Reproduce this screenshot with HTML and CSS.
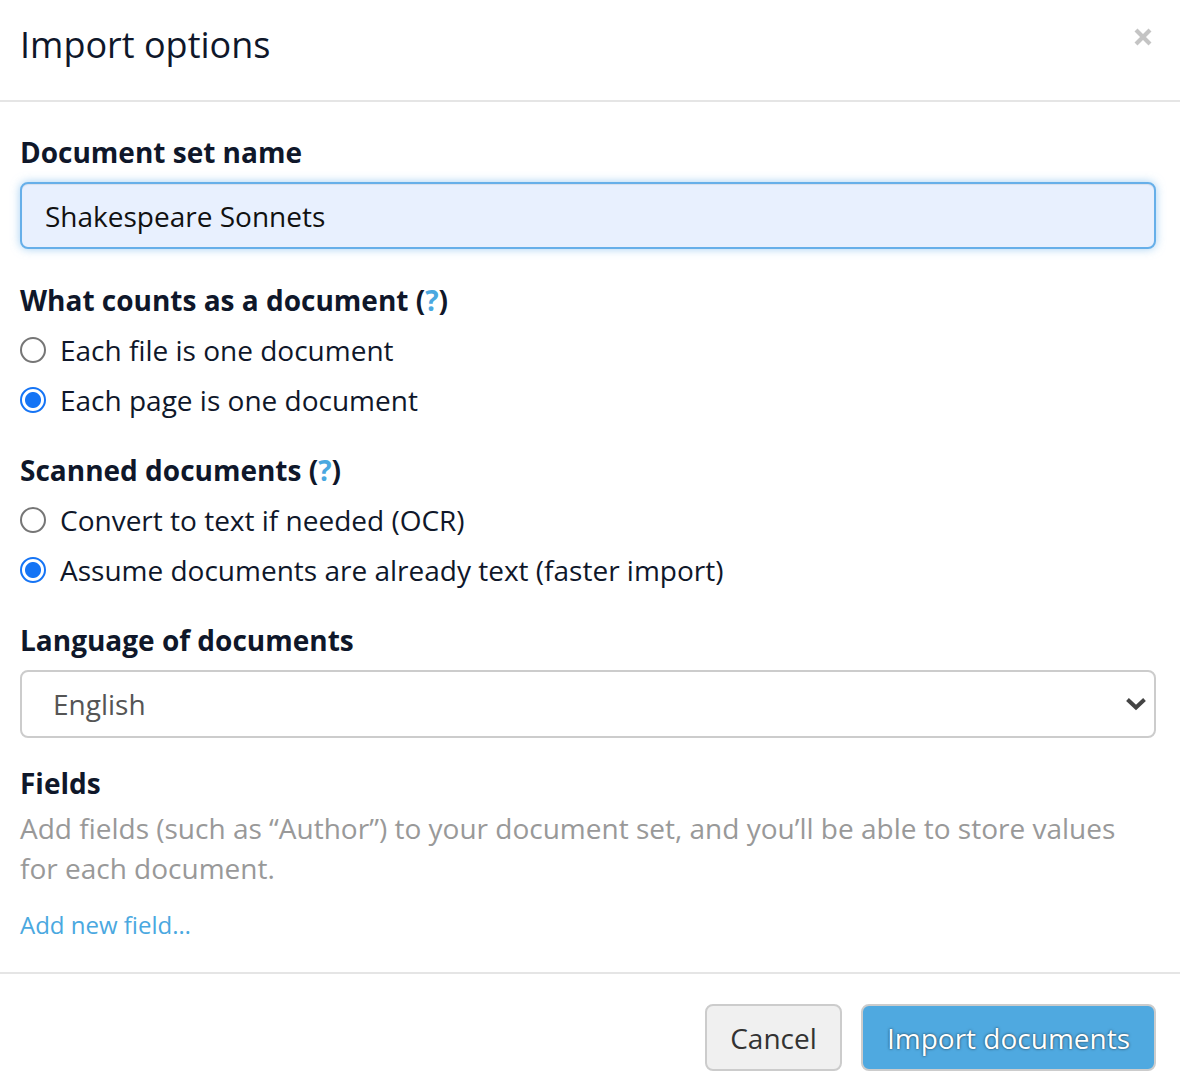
FILE: index.html
```html
<!DOCTYPE html>
<html lang="en">
<head>
<meta charset="utf-8">
<title>Import options</title>
<link rel="stylesheet" href="styles.css">
</head>
<body>
<div class="modal">
  <header class="modal-header">
    <h1 class="modal-title">Import options</h1>
    <button class="close" type="button" aria-label="Close">
      <svg width="20" height="20" viewBox="0 0 20 20"><path d="M3 3 L17 17 M17 3 L3 17" stroke="#c4c4c4" stroke-width="4.2" stroke-linecap="butt"/></svg>
    </button>
  </header>
  <main class="modal-body">
    <label class="label" for="name">Document set name</label>
    <input class="text-input" id="name" type="text" value="Shakespeare Sonnets">

    <div class="label gap">What counts as a document (<a class="help">?</a>)</div>
    <div class="radio-group">
      <label class="radio-row"><span class="radio"></span>Each file is one document</label>
      <label class="radio-row"><span class="radio checked"></span>Each page is one document</label>
    </div>

    <div class="label gap-sm">Scanned documents (<a class="help">?</a>)</div>
    <div class="radio-group">
      <label class="radio-row"><span class="radio"></span>Convert to text if needed (OCR)</label>
      <label class="radio-row"><span class="radio checked"></span>Assume documents are already text (faster import)</label>
    </div>

    <div class="label gap-sm">Language of documents</div>
    <div class="select">
      <span>English</span>
      <svg class="chevron" width="22" height="14" viewBox="0 0 22 14"><path d="M2.5 2.5 L11 10.5 L19.5 2.5" fill="none" stroke="#444" stroke-width="4"/></svg>
    </div>

    <div class="label gap-sm">Fields</div>
    <p class="help-text">Add fields (such as “Author”) to your document set, and you’ll be able to store values for each document.</p>
    <a class="add-link">Add new field…</a>
  </main>
  <footer class="modal-footer">
    <button class="btn btn-default" type="button">Cancel</button>
    <button class="btn btn-primary" type="button">Import documents</button>
  </footer>
</div>
</body>
</html>
```

FILE: styles.css
```css
* { box-sizing: border-box; }
html, body { margin: 0; padding: 0; background: #fff; }
body {
  font-family: "Open Sans", "Liberation Sans", sans-serif;
  color: #0f172a;
  font-size: 28px;
}
.modal { width: 1180px; }
.modal-header {
  height: 102px;
  border-bottom: 2px solid #e5e5e5;
  display: flex;
  justify-content: space-between;
  align-items: flex-start;
  padding: 0 27px 0 20px;
}
.modal-title {
  margin: 0;
  font-size: 36px;
  font-weight: 400;
  line-height: 90px;
}
.close {
  border: 0;
  background: none;
  padding: 0;
  margin-top: 27px;
  width: 20px;
  height: 20px;
  display: block;
}
.close svg { display: block; }
.modal-body {
  padding: 30px 24px 27px 20px;
  display: flex;
  flex-direction: column;
  align-items: flex-start;
}
.label {
  font-weight: 700;
  font-size: 28px;
  line-height: 40px;
  display: block;
}
.gap { margin-top: 31px; }
.gap-sm { margin-top: 25px; }
.help { color: #4aa8e0; }
.text-input {
  margin-top: 10px;
  width: 100%;
  height: 67px;
  border: 2px solid #66afe9;
  border-radius: 8px;
  background: #e8f0fe;
  box-shadow: inset 0 1px 1px rgba(0,0,0,.075), 0 0 10px rgba(102,175,233,.6);
  font-family: inherit;
  font-size: 28px;
  color: #111;
  padding: 0 23px;
  outline: none;
}
.radio-group {
  margin-top: 5px;
  display: flex;
  flex-direction: column;
}
.radio-row {
  display: flex;
  align-items: center;
  height: 50px;
  line-height: 50px;
  font-size: 28px;
}
.radio {
  width: 26px;
  height: 26px;
  border-radius: 50%;
  border: 2px solid #767676;
  margin-right: 14px;
  background: #fff;
  flex: none;
}
.radio.checked {
  border: 2px solid #1574f5;
  background: radial-gradient(circle, #1574f5 0 7.5px, #fff 8.5px);
}
.select {
  margin-top: 10px;
  width: 100%;
  height: 68px;
  border: 2px solid #ccc;
  border-radius: 8px;
  background: #fff;
  display: flex;
  align-items: center;
  justify-content: space-between;
  padding: 0 7px 0 31px;
  color: #555;
  font-size: 28px;
}
.chevron { display: block; }
.help-text {
  margin: 5px 0 0;
  max-width: 1115px;
  color: #999;
  font-size: 28px;
  line-height: 40px;
}
.add-link {
  margin-top: 17px;
  color: #4aa8e0;
  font-size: 24px;
  line-height: 40px;
}
.modal-footer {
  border-top: 2px solid #e5e5e5;
  padding: 30px 24px 20px;
  display: flex;
  justify-content: flex-end;
  gap: 19px;
}
.btn {
  height: 67px;
  border-radius: 8px;
  border: 2px solid #ccc;
  font-family: inherit;
  font-size: 28px;
  padding: 0;
  white-space: nowrap;
}
.btn-default {
  background: #f0f0f0;
  color: #333;
  width: 137px;
}
.btn-primary {
  background: #4fa9e0;
  color: #fff;
  width: 295px;
  text-shadow: 0 0 3px rgba(0,0,0,.6), 0 0 1px rgba(0,0,0,.3);
}
```
